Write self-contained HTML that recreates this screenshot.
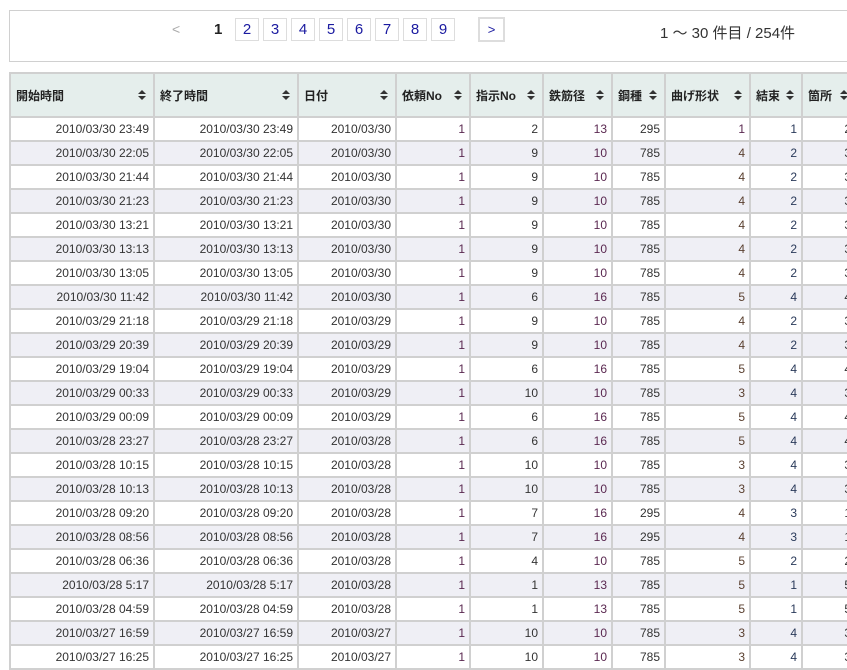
<!DOCTYPE html>
<html><head><meta charset="utf-8"><style>
body{margin:0;width:847px;height:667px;overflow:hidden;background:#fff;font-family:"Liberation Sans","Noto Sans CJK JP",sans-serif;color:#333}
.top{position:absolute;left:9px;top:10px;width:860px;height:52px;border:1px solid #d0d0d0;box-sizing:border-box}
.pg{position:absolute;top:18px;height:23px;width:24px;border:1px solid #ddd;box-sizing:border-box;text-align:center;line-height:21px;font-size:15px;color:#1a1aa0}
.cnt{position:absolute;left:660px;top:22px;font-size:15px;color:#333}
table{position:absolute;left:9px;top:72px;border-collapse:separate;border-spacing:2px;background:#d0d0d0;table-layout:fixed;width:850px;font-size:12px}
th,td{padding:0;box-sizing:border-box}
th{background:#e5eeec;height:42px;text-align:left;font-weight:bold;position:relative;color:#222}
th div{padding-left:5px}
th svg{position:absolute;right:7px;top:16px}
td{height:22px;text-align:right;background:#fff;white-space:nowrap}
td div{padding-right:4px;overflow:hidden}
tr:nth-child(odd) td{background:#efeff5}
td.p{color:#5a2850}td.b{color:#5a4030}td.n{color:#2a3a5a}
</style></head><body>
<div class="top"></div>
<div style="position:absolute;left:172px;top:21px;font-size:14px;color:#aaa">&lt;</div>
<div style="position:absolute;left:214px;top:21px;font-size:15px;font-weight:bold;color:#222">1</div>
<div class="pg" style="left:235px">2</div><div class="pg" style="left:263px">3</div><div class="pg" style="left:291px">4</div><div class="pg" style="left:319px">5</div><div class="pg" style="left:347px">6</div><div class="pg" style="left:375px">7</div><div class="pg" style="left:403px">8</div><div class="pg" style="left:431px">9</div>
<div class="pg" style="left:478px;top:17px;width:27px;height:25px;border:2px solid #ddd;font-size:13px;line-height:21px">&gt;</div>
<div class="cnt">1 〜 30 件目 / 254件</div>
<table>
<colgroup><col style="width:142px"><col style="width:142px"><col style="width:96px"><col style="width:72px"><col style="width:71px"><col style="width:67px"><col style="width:51px"><col style="width:83px"><col style="width:50px"><col style="width:52px"><col style="width:50px"></colgroup>
<tr>
<th><div>開始時間</div><svg width="8" height="10"><path d="M4 0L8 4H0z M4 10L8 6H0z" fill="#333"/></svg></th>
<th><div>終了時間</div><svg width="8" height="10"><path d="M4 0L8 4H0z M4 10L8 6H0z" fill="#333"/></svg></th>
<th><div>日付</div><svg width="8" height="10"><path d="M4 0L8 4H0z M4 10L8 6H0z" fill="#333"/></svg></th>
<th><div>依頼No</div><svg width="8" height="10"><path d="M4 0L8 4H0z M4 10L8 6H0z" fill="#333"/></svg></th>
<th><div>指示No</div><svg width="8" height="10"><path d="M4 0L8 4H0z M4 10L8 6H0z" fill="#333"/></svg></th>
<th><div>鉄筋径</div><svg width="8" height="10"><path d="M4 0L8 4H0z M4 10L8 6H0z" fill="#333"/></svg></th>
<th><div>鋼種</div><svg width="8" height="10"><path d="M4 0L8 4H0z M4 10L8 6H0z" fill="#333"/></svg></th>
<th><div>曲げ形状</div><svg width="8" height="10"><path d="M4 0L8 4H0z M4 10L8 6H0z" fill="#333"/></svg></th>
<th><div>結束</div><svg width="8" height="10"><path d="M4 0L8 4H0z M4 10L8 6H0z" fill="#333"/></svg></th>
<th><div>箇所</div><svg width="8" height="10"><path d="M4 0L8 4H0z M4 10L8 6H0z" fill="#333"/></svg></th>
<th></th></tr>
<tr><td><div>2010/03/30 23:49</div></td><td><div>2010/03/30 23:49</div></td><td><div>2010/03/30</div></td><td class="p"><div>1</div></td><td><div>2</div></td><td class="p"><div>13</div></td><td><div>295</div></td><td class="p"><div>1</div></td><td class="n"><div>1</div></td><td><div>2</div></td><td></td></tr>
<tr><td><div>2010/03/30 22:05</div></td><td><div>2010/03/30 22:05</div></td><td><div>2010/03/30</div></td><td class="p"><div>1</div></td><td><div>9</div></td><td class="p"><div>10</div></td><td><div>785</div></td><td class="b"><div>4</div></td><td class="n"><div>2</div></td><td><div>3</div></td><td></td></tr>
<tr><td><div>2010/03/30 21:44</div></td><td><div>2010/03/30 21:44</div></td><td><div>2010/03/30</div></td><td class="p"><div>1</div></td><td><div>9</div></td><td class="p"><div>10</div></td><td><div>785</div></td><td class="b"><div>4</div></td><td class="n"><div>2</div></td><td><div>3</div></td><td></td></tr>
<tr><td><div>2010/03/30 21:23</div></td><td><div>2010/03/30 21:23</div></td><td><div>2010/03/30</div></td><td class="p"><div>1</div></td><td><div>9</div></td><td class="p"><div>10</div></td><td><div>785</div></td><td class="b"><div>4</div></td><td class="n"><div>2</div></td><td><div>3</div></td><td></td></tr>
<tr><td><div>2010/03/30 13:21</div></td><td><div>2010/03/30 13:21</div></td><td><div>2010/03/30</div></td><td class="p"><div>1</div></td><td><div>9</div></td><td class="p"><div>10</div></td><td><div>785</div></td><td class="b"><div>4</div></td><td class="n"><div>2</div></td><td><div>3</div></td><td></td></tr>
<tr><td><div>2010/03/30 13:13</div></td><td><div>2010/03/30 13:13</div></td><td><div>2010/03/30</div></td><td class="p"><div>1</div></td><td><div>9</div></td><td class="p"><div>10</div></td><td><div>785</div></td><td class="b"><div>4</div></td><td class="n"><div>2</div></td><td><div>3</div></td><td></td></tr>
<tr><td><div>2010/03/30 13:05</div></td><td><div>2010/03/30 13:05</div></td><td><div>2010/03/30</div></td><td class="p"><div>1</div></td><td><div>9</div></td><td class="p"><div>10</div></td><td><div>785</div></td><td class="b"><div>4</div></td><td class="n"><div>2</div></td><td><div>3</div></td><td></td></tr>
<tr><td><div>2010/03/30 11:42</div></td><td><div>2010/03/30 11:42</div></td><td><div>2010/03/30</div></td><td class="p"><div>1</div></td><td><div>6</div></td><td class="p"><div>16</div></td><td><div>785</div></td><td class="b"><div>5</div></td><td class="n"><div>4</div></td><td><div>4</div></td><td></td></tr>
<tr><td><div>2010/03/29 21:18</div></td><td><div>2010/03/29 21:18</div></td><td><div>2010/03/29</div></td><td class="p"><div>1</div></td><td><div>9</div></td><td class="p"><div>10</div></td><td><div>785</div></td><td class="b"><div>4</div></td><td class="n"><div>2</div></td><td><div>3</div></td><td></td></tr>
<tr><td><div>2010/03/29 20:39</div></td><td><div>2010/03/29 20:39</div></td><td><div>2010/03/29</div></td><td class="p"><div>1</div></td><td><div>9</div></td><td class="p"><div>10</div></td><td><div>785</div></td><td class="b"><div>4</div></td><td class="n"><div>2</div></td><td><div>3</div></td><td></td></tr>
<tr><td><div>2010/03/29 19:04</div></td><td><div>2010/03/29 19:04</div></td><td><div>2010/03/29</div></td><td class="p"><div>1</div></td><td><div>6</div></td><td class="p"><div>16</div></td><td><div>785</div></td><td class="b"><div>5</div></td><td class="n"><div>4</div></td><td><div>4</div></td><td></td></tr>
<tr><td><div>2010/03/29 00:33</div></td><td><div>2010/03/29 00:33</div></td><td><div>2010/03/29</div></td><td class="p"><div>1</div></td><td><div>10</div></td><td class="p"><div>10</div></td><td><div>785</div></td><td class="b"><div>3</div></td><td class="n"><div>4</div></td><td><div>3</div></td><td></td></tr>
<tr><td><div>2010/03/29 00:09</div></td><td><div>2010/03/29 00:09</div></td><td><div>2010/03/29</div></td><td class="p"><div>1</div></td><td><div>6</div></td><td class="p"><div>16</div></td><td><div>785</div></td><td class="b"><div>5</div></td><td class="n"><div>4</div></td><td><div>4</div></td><td></td></tr>
<tr><td><div>2010/03/28 23:27</div></td><td><div>2010/03/28 23:27</div></td><td><div>2010/03/28</div></td><td class="p"><div>1</div></td><td><div>6</div></td><td class="p"><div>16</div></td><td><div>785</div></td><td class="b"><div>5</div></td><td class="n"><div>4</div></td><td><div>4</div></td><td></td></tr>
<tr><td><div>2010/03/28 10:15</div></td><td><div>2010/03/28 10:15</div></td><td><div>2010/03/28</div></td><td class="p"><div>1</div></td><td><div>10</div></td><td class="p"><div>10</div></td><td><div>785</div></td><td class="b"><div>3</div></td><td class="n"><div>4</div></td><td><div>3</div></td><td></td></tr>
<tr><td><div>2010/03/28 10:13</div></td><td><div>2010/03/28 10:13</div></td><td><div>2010/03/28</div></td><td class="p"><div>1</div></td><td><div>10</div></td><td class="p"><div>10</div></td><td><div>785</div></td><td class="b"><div>3</div></td><td class="n"><div>4</div></td><td><div>3</div></td><td></td></tr>
<tr><td><div>2010/03/28 09:20</div></td><td><div>2010/03/28 09:20</div></td><td><div>2010/03/28</div></td><td class="p"><div>1</div></td><td><div>7</div></td><td class="p"><div>16</div></td><td><div>295</div></td><td class="b"><div>4</div></td><td class="n"><div>3</div></td><td><div>1</div></td><td></td></tr>
<tr><td><div>2010/03/28 08:56</div></td><td><div>2010/03/28 08:56</div></td><td><div>2010/03/28</div></td><td class="p"><div>1</div></td><td><div>7</div></td><td class="p"><div>16</div></td><td><div>295</div></td><td class="b"><div>4</div></td><td class="n"><div>3</div></td><td><div>1</div></td><td></td></tr>
<tr><td><div>2010/03/28 06:36</div></td><td><div>2010/03/28 06:36</div></td><td><div>2010/03/28</div></td><td class="p"><div>1</div></td><td><div>4</div></td><td class="p"><div>10</div></td><td><div>785</div></td><td class="b"><div>5</div></td><td class="n"><div>2</div></td><td><div>2</div></td><td></td></tr>
<tr><td><div>2010/03/28 5:17</div></td><td><div>2010/03/28 5:17</div></td><td><div>2010/03/28</div></td><td class="p"><div>1</div></td><td><div>1</div></td><td class="p"><div>13</div></td><td><div>785</div></td><td class="b"><div>5</div></td><td class="n"><div>1</div></td><td><div>5</div></td><td></td></tr>
<tr><td><div>2010/03/28 04:59</div></td><td><div>2010/03/28 04:59</div></td><td><div>2010/03/28</div></td><td class="p"><div>1</div></td><td><div>1</div></td><td class="p"><div>13</div></td><td><div>785</div></td><td class="b"><div>5</div></td><td class="n"><div>1</div></td><td><div>5</div></td><td></td></tr>
<tr><td><div>2010/03/27 16:59</div></td><td><div>2010/03/27 16:59</div></td><td><div>2010/03/27</div></td><td class="p"><div>1</div></td><td><div>10</div></td><td class="p"><div>10</div></td><td><div>785</div></td><td class="b"><div>3</div></td><td class="n"><div>4</div></td><td><div>3</div></td><td></td></tr>
<tr><td><div>2010/03/27 16:25</div></td><td><div>2010/03/27 16:25</div></td><td><div>2010/03/27</div></td><td class="p"><div>1</div></td><td><div>10</div></td><td class="p"><div>10</div></td><td><div>785</div></td><td class="b"><div>3</div></td><td class="n"><div>4</div></td><td><div>3</div></td><td></td></tr>
</table>
</body></html>
